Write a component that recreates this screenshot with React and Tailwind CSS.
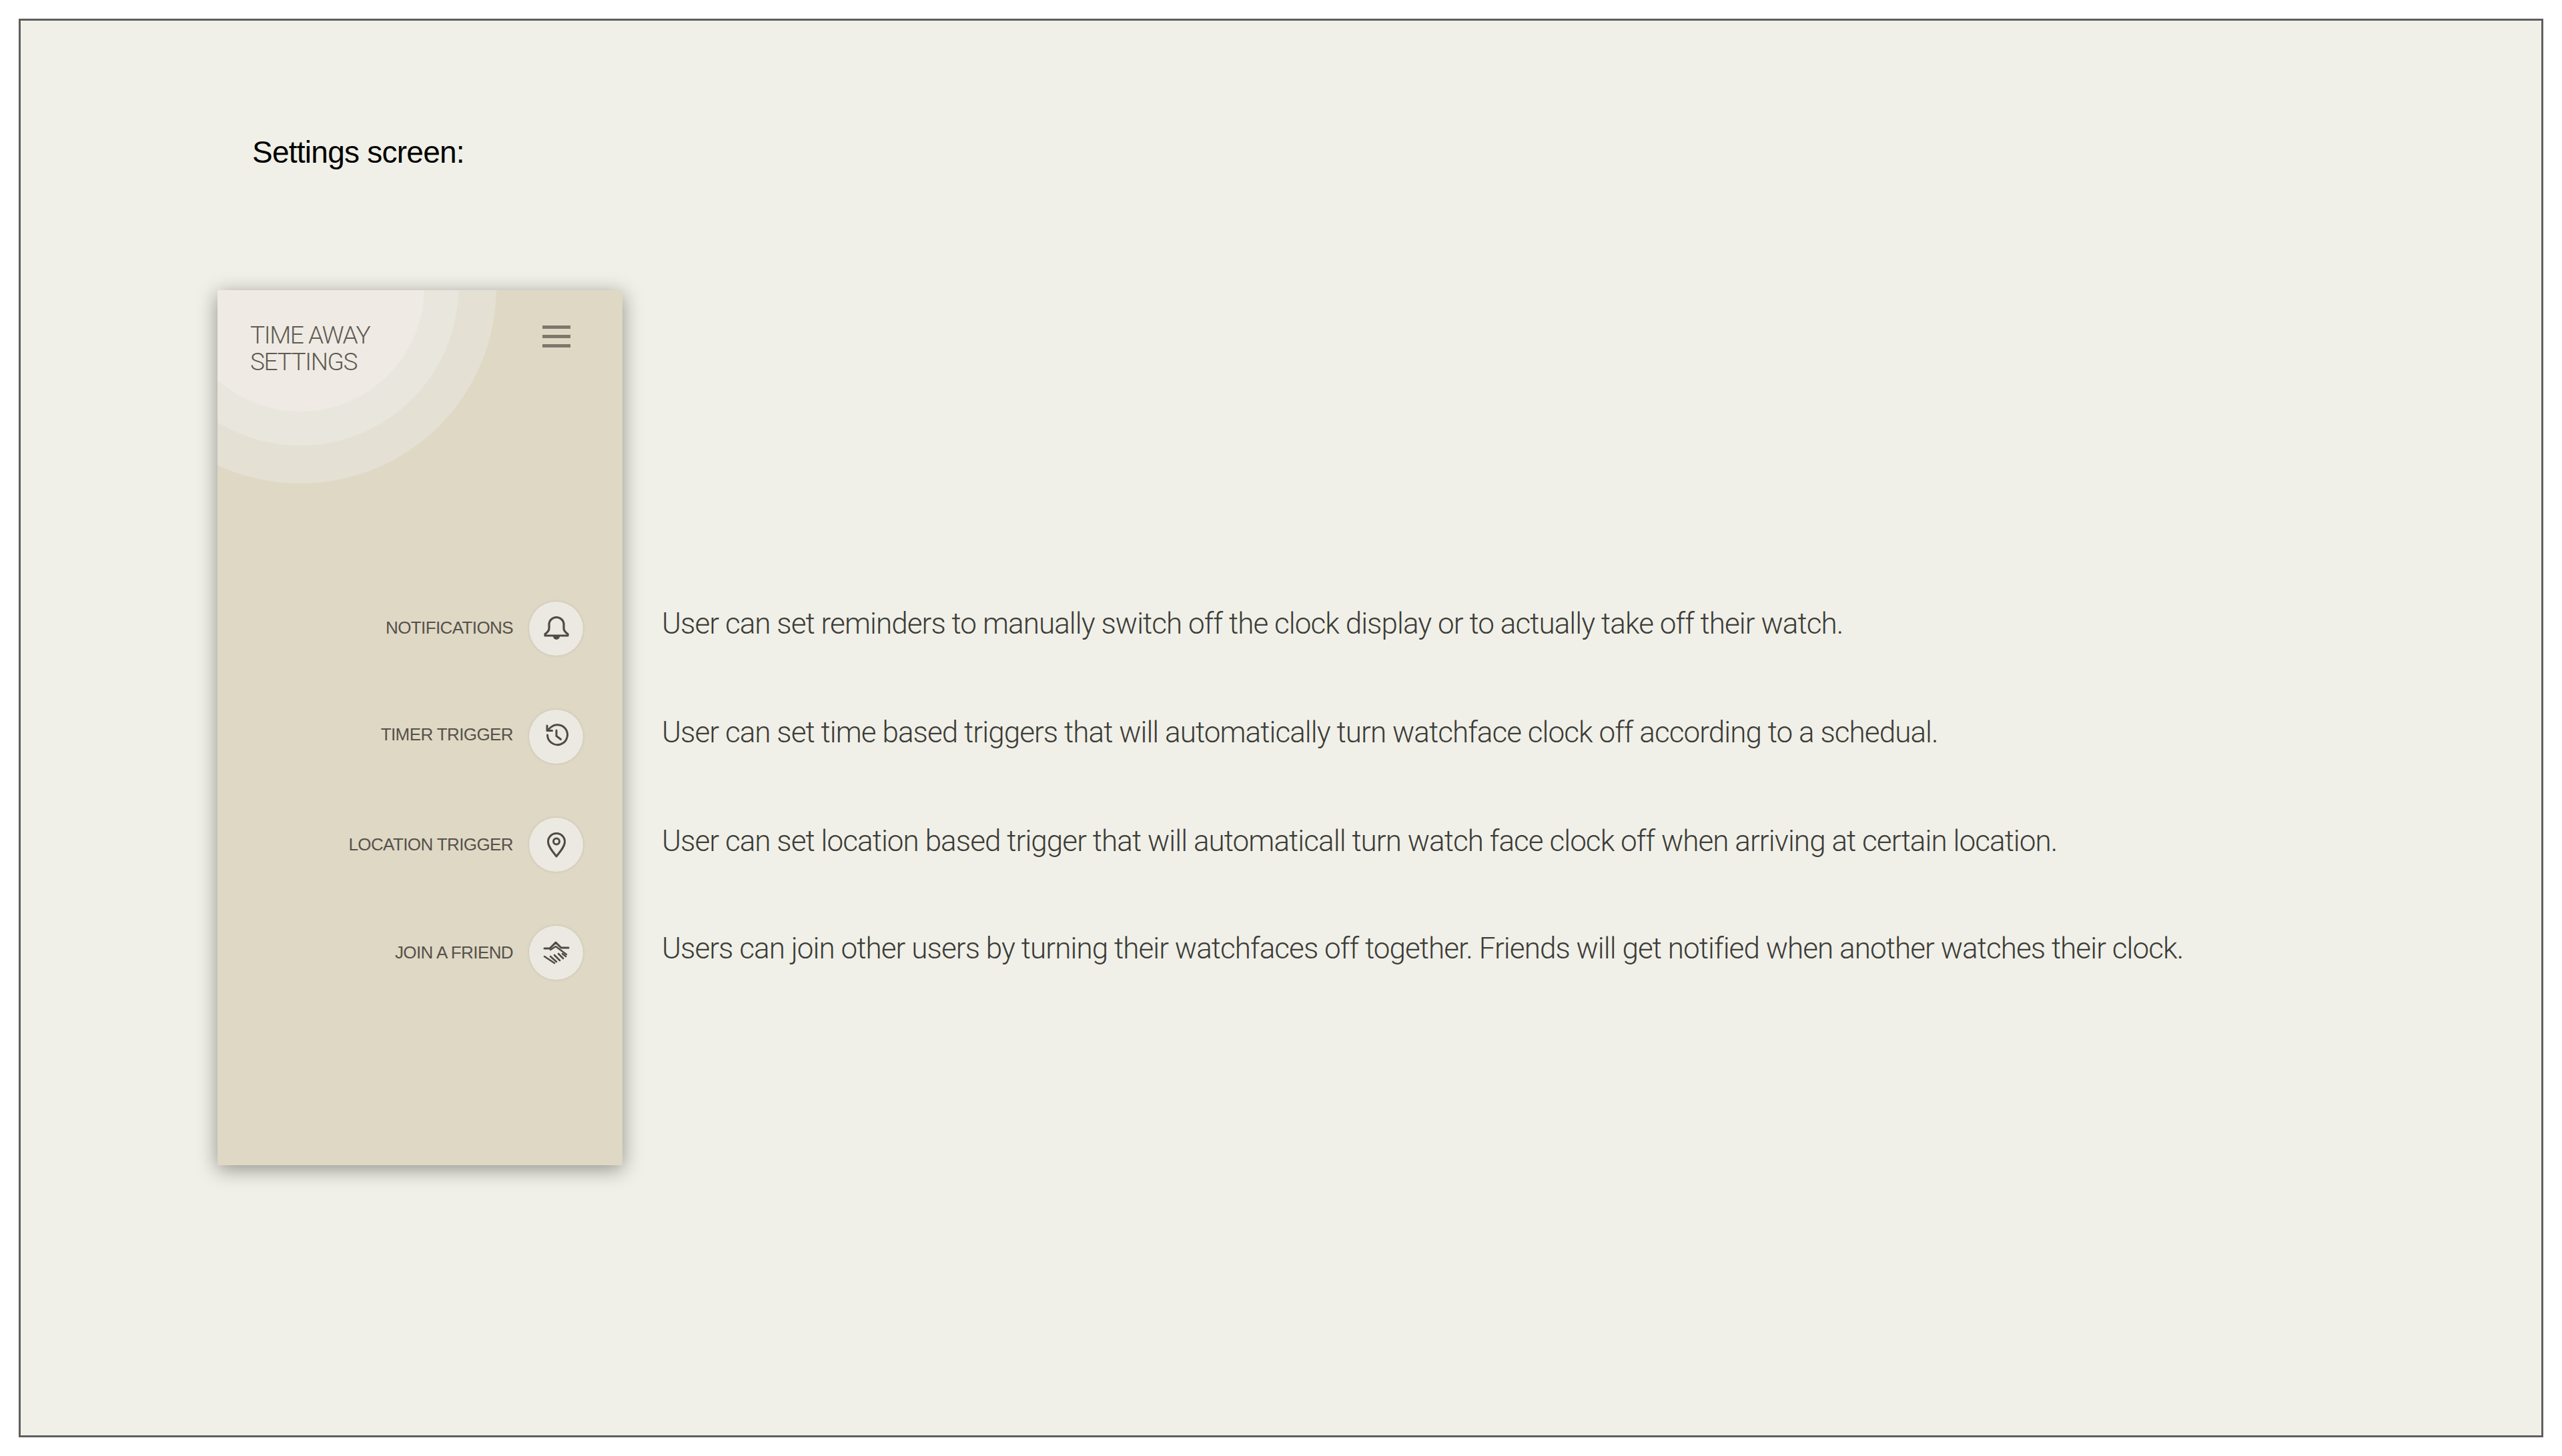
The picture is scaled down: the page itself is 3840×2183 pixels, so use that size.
import React from 'react';

const iconProps = {
  width: 60,
  height: 60,
  viewBox: '0 0 60 60',
  fill: 'none',
  stroke: '#4f4b43',
  strokeLinejoin: 'round',
  strokeLinecap: 'round',
};

function BellIcon() {
  return (
    <svg {...iconProps} strokeWidth="3.2">
      <path d="M19 23a11 10.500 0 0 1 22 0v6c0 4 3 6.500 6 8.500v2.500H13v-2.500c3-2 6-4.500 6-8.500z" />
      <path d="M25 41h10a5 5 0 0 1-10 0z" fill="#4f4b43" stroke="none" />
    </svg>
  );
}

function HistoryIcon() {
  return (
    <svg {...iconProps} strokeWidth="3">
      <path d="M16.500 27a15 15 0 1 0 5-11.500L16.500 20" />
      <path d="M16 13v7.500h7.500" />
      <path d="M30 20v8.500l6.500 5" />
    </svg>
  );
}

function PinIcon() {
  return (
    <svg {...iconProps} strokeWidth="3">
      <path d="M30 47C24 39.500 17.500 32 17.500 25a12.500 12.500 0 0 1 25 0C42.500 32 36 39.500 30 47z" />
      <circle cx="30" cy="24.500" r="4.500" />
    </svg>
  );
}

function ShakeIcon() {
  return (
    <svg {...iconProps} strokeWidth="3">
      <path d="M12 23h8l9-9 8 8h11" />
      <path d="M21 25l8-5 16 12" strokeWidth="2.400" />
      <path d="M12 35l15 10M21 35l9 8M27 33l8 8M33 31l7 7M39 31l5 4" strokeWidth="2.600" />
    </svg>
  );
}

const rows = [
  { label: 'NOTIFICATIONS', icon: <BellIcon />, labelClass: '-mt-[2px]' },
  { label: 'TIMER TRIGGER', icon: <HistoryIcon />, labelClass: '-mt-[6px]' },
  { label: 'LOCATION TRIGGER', icon: <PinIcon />, labelClass: '' },
  { label: 'JOIN A FRIEND', icon: <ShakeIcon />, labelClass: '' },
];

const notes = [
  'User can set reminders to manually switch off the clock display or to actually take off their watch.',
  'User can set time based triggers that will automatically turn watchface clock off according to a schedual.',
  'User can set location based trigger that will automaticall turn watch face clock off when arriving at certain location.',
  'Users can join other users by turning their watchfaces off together. Friends will get notified when another watches their clock.',
];

export default function App() {
  return (
    <div className="w-[3840px] h-[2183px] overflow-hidden bg-white pt-[28px] pl-[28px] font-['Liberation_Sans',sans-serif]">
      <div className="w-[3784px] h-[2127px] bg-[#f0f0e8] border-[3px] border-[#5f5f5f] pt-[167px] pl-[295px]">
        <h1 className="h-[65px] pl-[52px] text-[46px] leading-[60px] tracking-[-0.75px] text-black">Settings screen:</h1>

        <div className="mt-[172px] flex">
          <div className="relative w-[607px] h-[1312px] bg-[#dfd8c5] shadow-[0_6px_28px_rgba(0,0,0,0.4)] overflow-hidden">
            <div className="absolute left-[-170px] top-[-298px] w-[588px] h-[588px] rounded-full bg-[#e4e0d4]" />
            <div className="absolute left-[-113px] top-[-241px] w-[474px] h-[474px] rounded-full bg-[#e9e6dd]" />
            <div className="absolute left-[-62px] top-[-190px] w-[372px] h-[372px] rounded-full bg-[#efebe4]" />

            <div className="relative pt-[48px] pl-[49px] pr-[78px] flex justify-between">
              <div className="font-['Roboto',sans-serif] font-light text-[37px] leading-[40px] tracking-[-1.4px] text-[#5f5b53]">
                <div>TIME AWAY</div>
                <div>SETTINGS</div>
              </div>
              <div className="mt-[5px] w-[42px] flex flex-col gap-[9px]">
                <div className="h-[5px] bg-[#7d786a]" />
                <div className="h-[5px] bg-[#7d786a]" />
                <div className="h-[5px] bg-[#7d786a]" />
              </div>
            </div>

            <div className="relative mt-[339px] pr-[59px] flex flex-col gap-[81px]">
              {rows.map((r) => (
                <div key={r.label} className="flex items-center justify-end gap-[24px] h-[81px]">
                  <span className={`text-[26px] tracking-[-0.6px] text-[#55514a] ${r.labelClass}`}>{r.label}</span>
                  <div className="w-[81px] h-[81px] rounded-full bg-[#ece9e2] shadow-[0_0_4px_rgba(0,0,0,0.12)] flex items-center justify-center">
                    {r.icon}
                  </div>
                </div>
              ))}
            </div>
          </div>

          <div className="ml-[59px] pt-[475px] flex flex-col gap-[113px] font-['Roboto',sans-serif] font-light text-[44px] leading-[50px] tracking-[-0.93px] text-[#3c3c38]">
            {notes.map((n) => (
              <p key={n} className="whitespace-nowrap last:-mt-[2px]">{n}</p>
            ))}
          </div>
        </div>
      </div>
    </div>
  );
}
